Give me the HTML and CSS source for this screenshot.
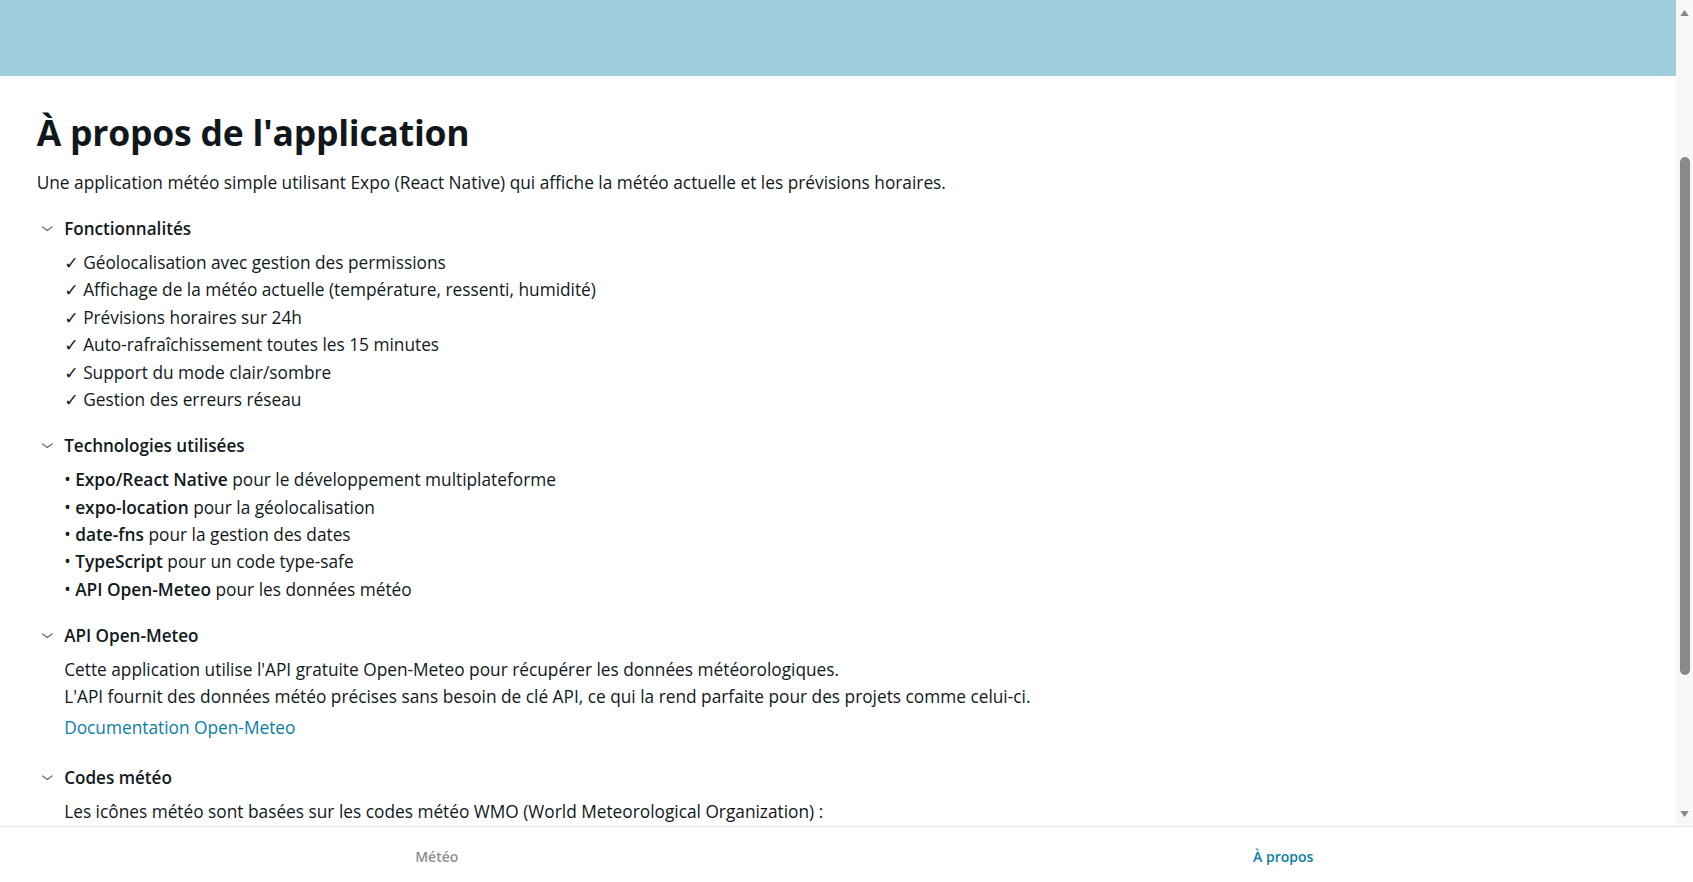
FILE: index.html
```html
<!DOCTYPE html>
<html lang="fr">
<head>
<meta charset="utf-8">
<title>À propos</title>
<link rel="stylesheet" href="styles.css">
</head>
<body>
<div class="app">
  <div class="viewport">
    <main class="page">
      <header class="hero"></header>
      <div class="content">
        <h1 class="title">À propos de l'application</h1>
        <p class="text">Une application météo simple utilisant Expo (React Native) qui affiche la météo actuelle et les prévisions horaires.</p>

        <section class="collapsible">
          <div class="coll-head">
            <svg class="chev" viewBox="0 0 24 24"><polyline points="6.5,10.5 12,14.5 17.5,10.5"/></svg>
            <span class="coll-title">Fonctionnalités</span>
          </div>
          <div class="coll-body">
            <p class="text">✓ Géolocalisation avec gestion des permissions</p>
            <p class="text">✓ Affichage de la météo actuelle (température, ressenti, humidité)</p>
            <p class="text">✓ Prévisions horaires sur 24h</p>
            <p class="text">✓ Auto-rafraîchissement toutes les 15 minutes</p>
            <p class="text">✓ Support du mode clair/sombre</p>
            <p class="text">✓ Gestion des erreurs réseau</p>
          </div>
        </section>

        <section class="collapsible">
          <div class="coll-head">
            <svg class="chev" viewBox="0 0 24 24"><polyline points="6.5,10.5 12,14.5 17.5,10.5"/></svg>
            <span class="coll-title">Technologies utilisées</span>
          </div>
          <div class="coll-body">
            <p class="text">• <b>Expo/React Native</b> pour le développement multiplateforme</p>
            <p class="text">• <b>expo-location</b> pour la géolocalisation</p>
            <p class="text">• <b>date-fns</b> pour la gestion des dates</p>
            <p class="text">• <b>TypeScript</b> pour un code type-safe</p>
            <p class="text">• <b>API Open-Meteo</b> pour les données météo</p>
          </div>
        </section>

        <section class="collapsible">
          <div class="coll-head">
            <svg class="chev" viewBox="0 0 24 24"><polyline points="6.5,10.5 12,14.5 17.5,10.5"/></svg>
            <span class="coll-title">API Open-Meteo</span>
          </div>
          <div class="coll-body">
            <p class="text">Cette application utilise l'API gratuite Open-Meteo pour récupérer les données météorologiques.</p>
            <p class="text">L'API fournit des données météo précises sans besoin de clé API, ce qui la rend parfaite pour des projets comme celui-ci.</p>
            <a class="link" href="#">Documentation Open-Meteo</a>
          </div>
        </section>

        <section class="collapsible">
          <div class="coll-head">
            <svg class="chev" viewBox="0 0 24 24"><polyline points="6.5,10.5 12,14.5 17.5,10.5"/></svg>
            <span class="coll-title">Codes météo</span>
          </div>
          <div class="coll-body">
            <p class="text">Les icônes météo sont basées sur les codes météo WMO (World Meteorological Organization) :</p>
          </div>
        </section>
      </div>
    </main>
    <div class="scrollbar" aria-hidden="true">
      <div class="sb-btn">
        <svg class="sb-arrow" viewBox="0 0 9 6"><path d="M0.3 6 L4 0.6 Q4.5 0 5 0.6 L8.7 6 Z"/></svg>
      </div>
      <div class="sb-track">
        <div class="sb-thumb"></div>
      </div>
      <div class="sb-btn">
        <svg class="sb-arrow" viewBox="0 0 9 6"><path d="M0.3 0 L4 5.4 Q4.5 6 5 5.4 L8.7 0 Z"/></svg>
      </div>
    </div>
  </div>
  <nav class="tabbar">
    <a class="tab" href="#"><span class="tab-label">Météo</span></a>
    <a class="tab tab-active" href="#"><span class="tab-label">À propos</span></a>
  </nav>
</div>
</body>
</html>
```

FILE: styles.css
```css
html, body {
  margin: 0;
  padding: 0;
  height: 100%;
  background: #ffffff;
}

body {
  font-family: "Open Sans", "DejaVu Sans", sans-serif;
  color: #11181c;
}

.app {
  display: flex;
  flex-direction: column;
  height: 100vh;
}

.viewport {
  flex: 1;
  min-height: 0;
  display: flex;
}

.page {
  flex: 1;
  min-width: 0;
  overflow: hidden;
}

.scrollbar {
  flex: none;
  width: 17px;
  display: flex;
  flex-direction: column;
  background: #f8f8f8;
}

.sb-btn {
  flex: none;
  height: 25px;
  display: flex;
  align-items: center;
  justify-content: center;
  padding-right: 1px;
}

.sb-arrow {
  width: 9px;
  height: 6px;
  fill: #8a8a8a;
}

.sb-track {
  flex: 1;
  display: flex;
  flex-direction: column;
  align-items: center;
}

.sb-thumb {
  margin-top: 132px;
  width: 10px;
  height: 518px;
  border-radius: 5px;
  background: #8a8a8a;
}

.hero {
  height: 76px;
  background: #a1cedc;
}

.content {
  display: flex;
  flex-direction: column;
  gap: 18.33px;
  padding: 38px 36.67px 36.67px;
}

.title {
  margin: 0;
  font-size: 35.5px;
  line-height: 36.67px;
  font-weight: 700;
  letter-spacing: -0.2px;
}

.text {
  margin: 0;
  font-size: 17.3px;
  line-height: 27.42px;
}

.text b {
  font-weight: 600;
}

.coll-head {
  display: flex;
  align-items: center;
  gap: 6.9px;
  height: 27.42px;
}

.chev {
  width: 20.6px;
  height: 20.6px;
  flex: none;
  fill: none;
  stroke: #687076;
  stroke-width: 1.6;
  stroke-linecap: round;
  stroke-linejoin: round;
}

.coll-title {
  font-size: 17.1px;
  line-height: 27.42px;
  font-weight: 600;
}

.coll-body {
  display: flex;
  flex-direction: column;
  align-items: flex-start;
  margin-top: 6.9px;
  margin-left: 27.5px;
}

.link {
  font-size: 17.3px;
  line-height: 34.4px;
  color: #0a7ea4;
  text-decoration: none;
}

.tabbar {
  display: flex;
  flex: none;
  height: 55px;
  border-top: 1px solid #e6e6e6;
  background: #ffffff;
}

.tab {
  flex: 1;
  display: flex;
  align-items: center;
  justify-content: center;
  padding-top: 3px;
  text-decoration: none;
  color: #8e8e8f;
}

.tab-label {
  padding-left: 27px;
  font-size: 14px;
  font-weight: 600;
}

.tab-active {
  color: #0a7ea4;
}
```
